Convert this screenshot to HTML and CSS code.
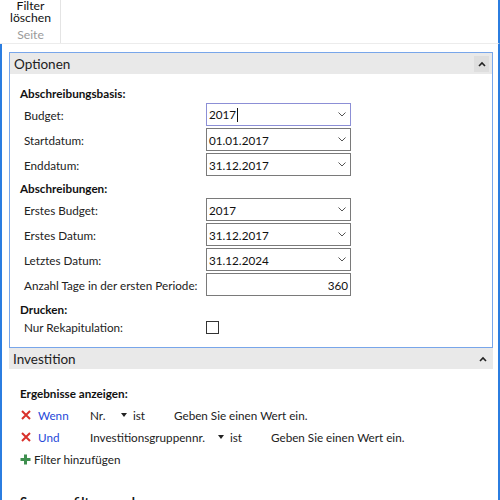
FILE: index.html
```html
<!DOCTYPE html>
<html lang="de">
<head>
<meta charset="utf-8">
<link rel="stylesheet" href="styles.css">
</head>
<body>
<div class="ribbon">
  <div class="group">
    <div class="btn">Filter<br>löschen</div>
    <div class="group-name">Seite</div>
  </div>
</div>
<div class="main">
  <section class="panel panel-focus">
    <div class="panel-head">
      <span>Optionen</span>
      <span class="collapse"><svg width="8" height="6" viewBox="0 0 8 6"><path d="M1 5 L4 2 L7 5" fill="none" stroke="#222" stroke-width="1.6"/></svg></span>
    </div>
    <div class="panel-body">
      <div class="heading">Abschreibungsbasis:</div>
      <div class="row"><label>Budget:</label><div class="field focus"><span>2017<i class="caret"></i></span><svg class="dd" width="8" height="5" viewBox="0 0 8 5"><path d="M0.5 0.5 L4 4 L7.5 0.5" fill="none" stroke="#555" stroke-width="1"/></svg></div></div>
      <div class="row"><label>Startdatum:</label><div class="field"><span>01.01.2017</span><svg class="dd" width="8" height="5" viewBox="0 0 8 5"><path d="M0.5 0.5 L4 4 L7.5 0.5" fill="none" stroke="#555" stroke-width="1"/></svg></div></div>
      <div class="row"><label>Enddatum:</label><div class="field"><span>31.12.2017</span><svg class="dd" width="8" height="5" viewBox="0 0 8 5"><path d="M0.5 0.5 L4 4 L7.5 0.5" fill="none" stroke="#555" stroke-width="1"/></svg></div></div>
      <div class="heading h2">Abschreibungen:</div>
      <div class="row"><label>Erstes Budget:</label><div class="field"><span>2017</span><svg class="dd" width="8" height="5" viewBox="0 0 8 5"><path d="M0.5 0.5 L4 4 L7.5 0.5" fill="none" stroke="#555" stroke-width="1"/></svg></div></div>
      <div class="row"><label>Erstes Datum:</label><div class="field"><span>31.12.2017</span><svg class="dd" width="8" height="5" viewBox="0 0 8 5"><path d="M0.5 0.5 L4 4 L7.5 0.5" fill="none" stroke="#555" stroke-width="1"/></svg></div></div>
      <div class="row"><label>Letztes Datum:</label><div class="field"><span>31.12.2024</span><svg class="dd" width="8" height="5" viewBox="0 0 8 5"><path d="M0.5 0.5 L4 4 L7.5 0.5" fill="none" stroke="#555" stroke-width="1"/></svg></div></div>
      <div class="row"><label>Anzahl Tage in der ersten Periode:</label><div class="field num"><span>360</span></div></div>
      <div class="heading h3">Drucken:</div>
      <div class="row check-row"><label>Nur Rekapitulation:</label><div class="checkbox"></div></div>
    </div>
  </section>
  <section class="panel">
    <div class="panel-head">
      <span>Investition</span>
      <span class="collapse plain"><svg width="8" height="6" viewBox="0 0 8 6"><path d="M1 5 L4 2 L7 5" fill="none" stroke="#222" stroke-width="1.6"/></svg></span>
    </div>
    <div class="panel-body inv">
      <div class="heading">Ergebnisse anzeigen:</div>
      <div class="filter first">
        <svg class="x" width="10" height="10" viewBox="0 0 10 10"><path d="M1 1 L9 9 M9 1 L1 9" stroke="#d9312b" stroke-width="2"/></svg>
        <span class="link">Wenn</span>
        <span class="fld w1">Nr.</span>
        <span class="tri"></span>
        <span class="op">ist</span>
        <span class="val">Geben Sie einen Wert ein.</span>
      </div>
      <div class="filter">
        <svg class="x" width="10" height="10" viewBox="0 0 10 10"><path d="M1 1 L9 9 M9 1 L1 9" stroke="#d9312b" stroke-width="2"/></svg>
        <span class="link">Und</span>
        <span class="fld w2">Investitionsgruppennr.</span>
        <span class="tri"></span>
        <span class="op">ist</span>
        <span class="val">Geben Sie einen Wert ein.</span>
      </div>
      <div class="add">
        <svg width="11" height="11" viewBox="0 0 11 11"><path d="M5.5 0.5 V10.5 M0.5 5.5 H10.5" stroke="#3f8f4f" stroke-width="3"/></svg>
        <span>Filter hinzufügen</span>
      </div>
      <div class="heading cut">Summen filtern nach:</div>
    </div>
  </section>
</div>
</body>
</html>
```
FILE: styles.css
```css
* { box-sizing: border-box; }
html, body { margin: 0; padding: 0; }
body {
  width: 500px;
  height: 500px;
  overflow: hidden;
  background: #fff;
  font-family: "Lato", "Open Sans", sans-serif;
  font-size: 11.7px;
  color: #222;
}
.ribbon {
  height: 44px;
  border-bottom: 1px solid #ececec;
  border-right: 2px solid #2b7de0;
  display: flex;
}
.group {
  width: 61px;
  border-right: 1px solid #e4e4e4;
  display: flex;
  flex-direction: column;
  align-items: center;
  padding-left: 1px;
}
.btn {
  text-align: center;
  line-height: 12px;
  padding-top: 0;
  font-size: 12.2px;
  color: #111;
}
.group-name {
  color: #9a9a9a;
  margin-top: 5px;
  line-height: 12px;
  font-size: 12.2px;
}
.main {
  height: 456px;
  border-left: 2px solid #2b7de0;
  border-right: 2px solid #2b7de0;
  padding: 8px 5px 0 7px;
}
.panel-focus {
  border: 1px solid #78a6ea;
}
.panel-head {
  height: 21px;
  background: #e9e9e9;
  display: flex;
  align-items: center;
  justify-content: space-between;
  padding-left: 4px;
  padding-right: 3px;
  font-size: 13.5px;
  color: #222;
}
.collapse {
  width: 15px;
  height: 16px;
  background: #dedede;
  display: flex;
  align-items: center;
  justify-content: center;
}
.collapse.plain { background: transparent; }
.panel-body {
  padding: 11px 0 13px 10px;
}
.heading {
  font-weight: bold;
  line-height: 16px;
  color: #111;
  white-space: nowrap;
}
.h2 { margin-top: 4px; margin-bottom: 2px; }
.h3 { margin-top: 5px; }
.row {
  display: flex;
  align-items: center;
  margin-top: 2px;
}
.row label {
  width: 186px;
  padding-left: 4px;
  color: #222;
  white-space: nowrap;
}
.field {
  width: 145px;
  height: 23px;
  border: 1px solid #7a7a7a;
  display: flex;
  align-items: center;
  justify-content: space-between;
  padding: 0 4px 0 2px;
  color: #111;
}
.field.focus { border-color: #8c8fd6; }
.field.num { justify-content: flex-end; padding-right: 2px; }
.caret {
  display: inline-block;
  width: 1px;
  height: 14px;
  background: #111;
  vertical-align: -3px;
  margin-left: 1px;
}
.check-row { margin-top: 3px; }
.checkbox {
  width: 13px;
  height: 13px;
  border: 1px solid #333;
}
.inv { padding: 16px 0 0 11px; }
.filter {
  display: flex;
  align-items: center;
  height: 22px;
  white-space: nowrap;
}
.filter.first { margin-top: 3px; }
.filter .x { margin-left: 1px; margin-right: 7px; }
.link { color: #2548d8; width: 52px; }
.fld.w1 { width: 31px; }
.fld.w2 { width: 128px; }
.tri {
  width: 0; height: 0;
  border-left: 3.5px solid transparent;
  border-right: 3.5px solid transparent;
  border-top: 4px solid #222;
  margin-right: 6px;
}
.op { width: 41px; }
.add {
  display: flex;
  align-items: center;
  gap: 3px;
  margin-top: 0;
  height: 22px;
}
.cut { margin-top: 24px; font-size: 13px; }
```
